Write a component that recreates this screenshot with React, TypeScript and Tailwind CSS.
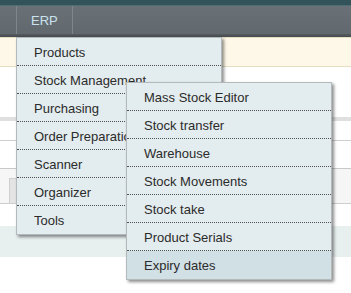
const mainItems = [
  "Products",
  "Stock Management",
  "Purchasing",
  "Order Preparation",
  "Scanner",
  "Organizer",
  "Tools",
];

const stockItems = [
  "Mass Stock Editor",
  "Stock transfer",
  "Warehouse",
  "Stock Movements",
  "Stock take",
  "Product Serials",
  "Expiry dates",
];

function MenuList({ items, active }: { items: string[]; active?: string }) {
  return (
    <ul className="w-[206px] border border-[#b4b9bb] bg-[#e3ecee] shadow-[2px_2px_3px_rgba(0,0,0,0.45)]">
      {items.map((label, i) => (
        <li
          key={label}
          className={`h-[28px] overflow-hidden whitespace-nowrap pl-[17px] pt-[2px] text-[13px] leading-[25px] text-[#2b2b2b] ${
            i < items.length - 1 ? "border-b border-dotted border-[#505050]" : ""
          } ${label === active ? "bg-[#d1e0e4]" : ""}`}
        >
          {label}
        </li>
      ))}
    </ul>
  );
}

export default function App() {
  return (
    <div className="relative h-[293px] w-[351px] overflow-hidden bg-white font-['Liberation_Sans',Arial,sans-serif]">
      {/* top nav */}
      <header>
        <div className="h-[5px] bg-[#33535b]" />
        <div className="h-px bg-[#4f6d74]" />
        <nav className="flex h-[28px] bg-gradient-to-b from-[#6a7176] to-[#62696e]">
          <div className="w-[16px]" />
          <div className="flex border-x border-[#80878b] pl-[14px] pr-[14px] pt-px text-[13px] leading-[27px] text-[#c9e2ee]">
            ERP
          </div>
        </nav>
        <div className="h-[3px] bg-gradient-to-b from-[#565c60] to-[#464b4f]" />
      </header>

      {/* page content behind the menu */}
      <div className="h-[30px] border-y border-[#e6ddc3] bg-[#fef8e8]" />
      <div className="h-[50px]" />
      <div className="h-[4px] bg-[#dfdfdf]" />
      <div className="h-[20px] border-b border-[#cfcfcf]" />
      <div className="h-[28px] border-b border-[#c9c9c9]" />
      <div className="flex h-[35px] items-end border-b border-[#cfcfcf] bg-[#f6f6f6] pl-[9px]">
        <div className="h-[25px] w-[20px] border-l border-t border-[#cfcfcf] bg-[#e4e4e4]" />
      </div>
      <div className="h-[22px]" />
      <div className="h-[31px] bg-[#e7f0ef]" />

      {/* dropdown */}
      <div className="absolute left-[16px] top-[37px]">
        <MenuList items={mainItems} />
      </div>
      <div className="absolute left-[126px] top-[82px]">
        <MenuList items={stockItems} active="Expiry dates" />
      </div>
    </div>
  );
}
